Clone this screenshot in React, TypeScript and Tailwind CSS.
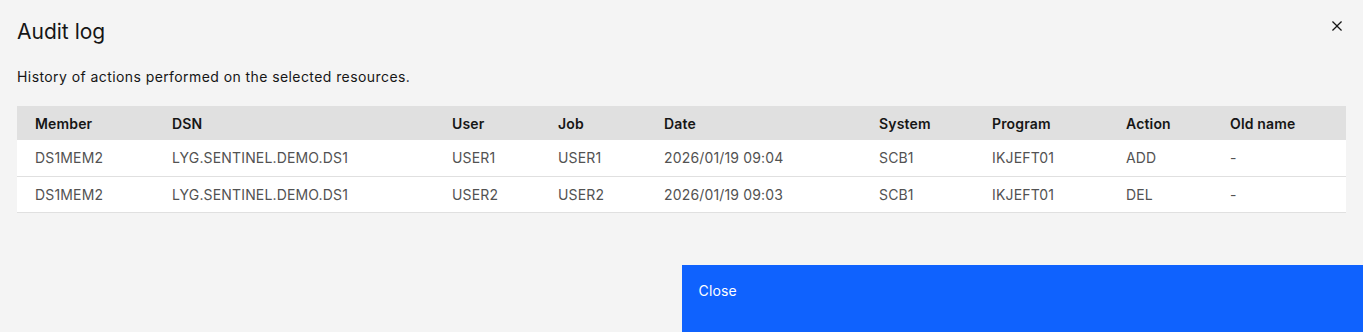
const columns = [
  { key: 'member', label: 'Member', width: 'w-[139px]' },
  { key: 'dsn', label: 'DSN', width: 'w-[280px]' },
  { key: 'user', label: 'User', width: 'w-[106px]' },
  { key: 'job', label: 'Job', width: 'w-[106px]' },
  { key: 'date', label: 'Date', width: 'w-[215px]' },
  { key: 'system', label: 'System', width: 'w-[113px]' },
  { key: 'program', label: 'Program', width: 'w-[134px]' },
  { key: 'action', label: 'Action', width: 'w-[104px]' },
  { key: 'oldName', label: 'Old name', width: '' },
] as const

type Row = Record<(typeof columns)[number]['key'], string>

const rows: Row[] = [
  {
    member: 'DS1MEM2',
    dsn: 'LYG.SENTINEL.DEMO.DS1',
    user: 'USER1',
    job: 'USER1',
    date: '2026/01/19 09:04',
    system: 'SCB1',
    program: 'IKJEFT01',
    action: 'ADD',
    oldName: '-',
  },
  {
    member: 'DS1MEM2',
    dsn: 'LYG.SENTINEL.DEMO.DS1',
    user: 'USER2',
    job: 'USER2',
    date: '2026/01/19 09:03',
    system: 'SCB1',
    program: 'IKJEFT01',
    action: 'DEL',
    oldName: '-',
  },
]

function CloseIcon() {
  return (
    <svg width="20" height="20" viewBox="0 0 32 32" fill="#161616" aria-hidden="true">
      <path d="M17.4141 16L24 9.4141 22.5859 8 16 14.5859 9.4143 8 8 9.4141 14.5859 16 8 22.5859 9.4143 24 16 17.4141 22.5859 24 24 22.5859 17.4141 16z" />
    </svg>
  )
}

export default function App() {
  return (
    <div className="flex h-[332px] w-full flex-col bg-[#f4f4f4] font-['Inter',sans-serif] tracking-[0.16px] text-[#161616]">
      <div className="flex items-start justify-between pl-[17px] pr-4 pt-4">
        <h2 className="pt-[2px] text-[21px] leading-7 font-normal tracking-normal">Audit log</h2>
        <button className="flex h-5 w-5 items-center justify-center" aria-label="Close">
          <CloseIcon />
        </button>
      </div>

      <p className="mt-[21px] pl-[17px] pr-4 text-[14px] leading-5 tracking-[0.42px]">
        History of actions performed on the selected resources.
      </p>

      <div className="mt-[19px] px-[17px]">
        <table className="w-full table-fixed border-collapse text-left text-[14px]">
          <thead>
            <tr className="h-[34px] bg-[#e0e0e0]">
              {columns.map((c, j) => (
                <th
                  key={c.key}
                  className={`${c.width} ${j === 0 ? 'pl-[18px] pr-4' : 'px-4'} font-semibold text-[#161616]`}
                >
                  {c.label}
                </th>
              ))}
            </tr>
          </thead>
          <tbody>
            {rows.map((r, i) => (
              <tr key={i} className="h-[36px] border-b border-[#e0e0e0] bg-white">
                {columns.map((c, j) => (
                  <td key={c.key} className={`${j === 0 ? 'pl-[18px] pr-4' : 'px-4'} text-[#525252]`}>
                    {r[c.key]}
                  </td>
                ))}
              </tr>
            ))}
          </tbody>
        </table>
      </div>

      <div className="mt-auto grid grid-cols-2">
        <div />
        <button className="flex h-[67px] items-start bg-[#0f62fe] pl-[17px] pr-4 pt-[17px] text-left text-[14px] leading-[18px] text-white">
          Close
        </button>
      </div>
    </div>
  )
}
